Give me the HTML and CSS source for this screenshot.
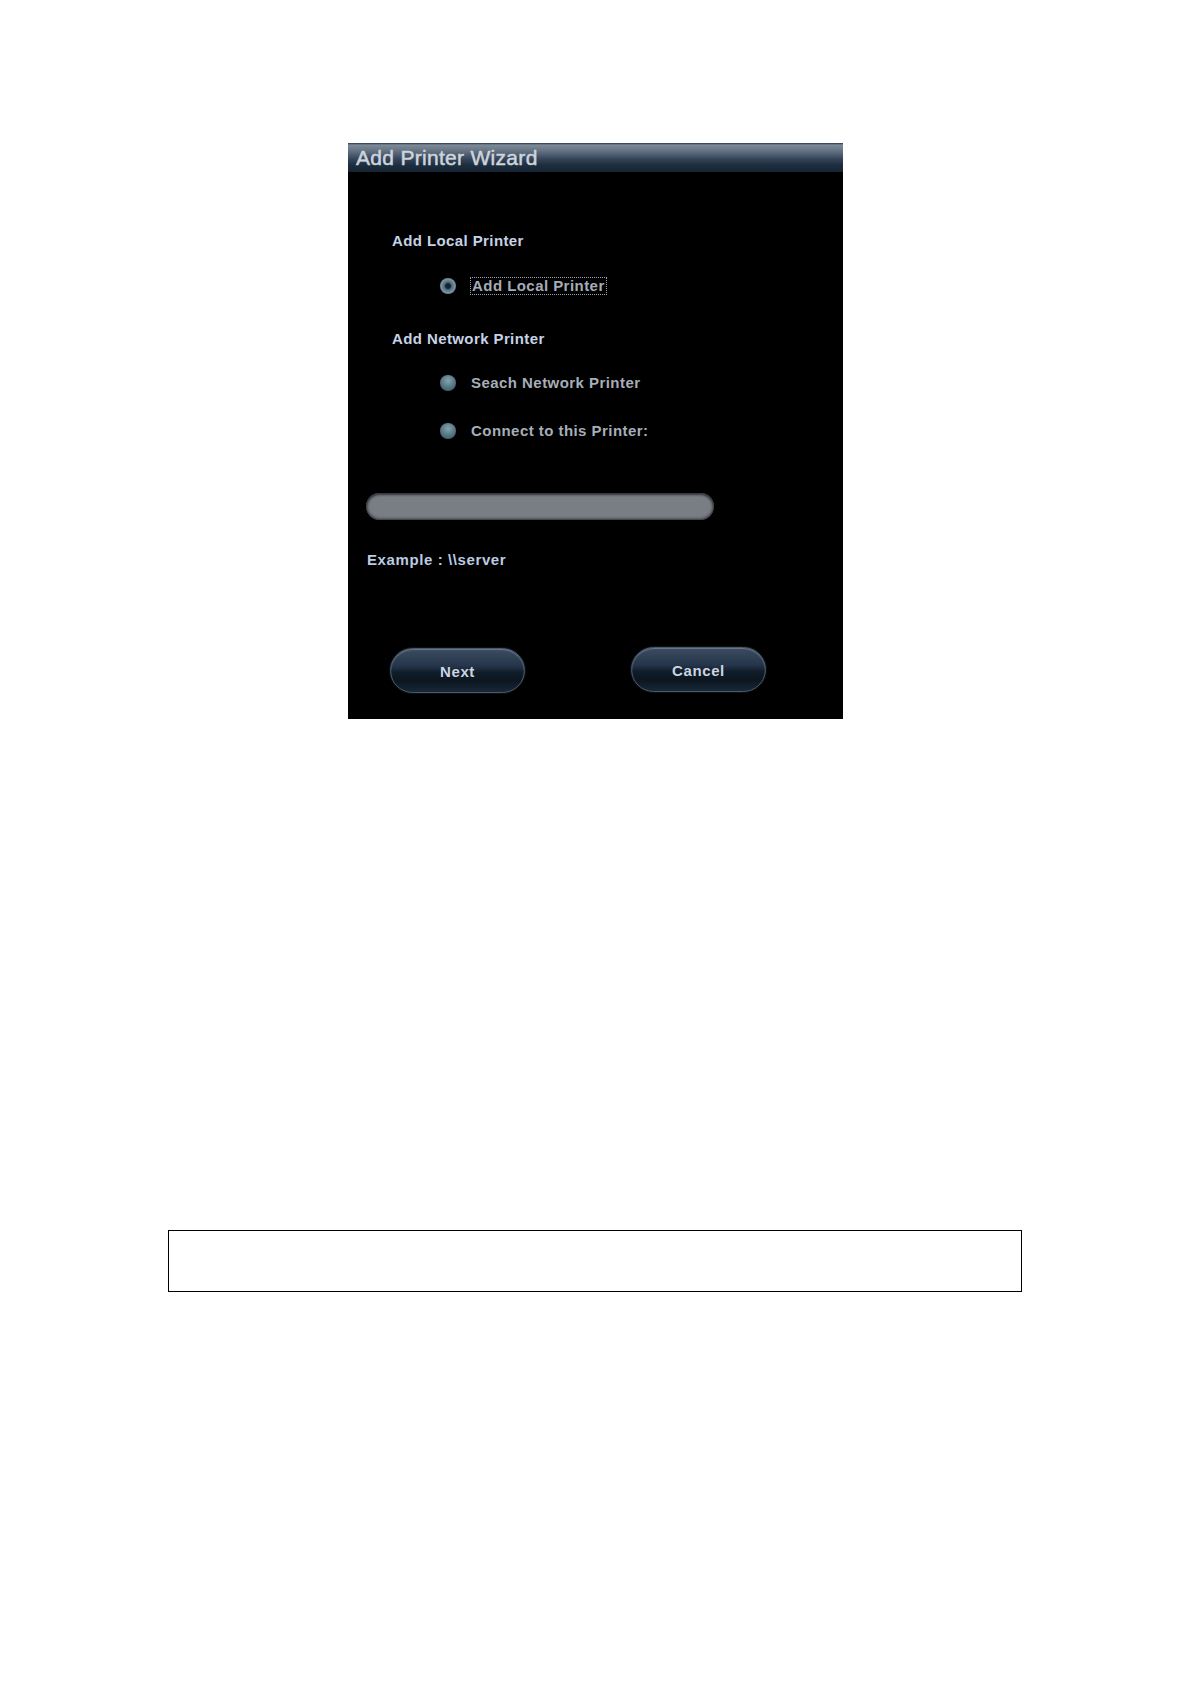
FILE: index.html
```html
<!DOCTYPE html>
<html lang="en">
<head>
<meta charset="utf-8">
<title>Add Printer Wizard</title>
<link rel="stylesheet" href="styles.css">
</head>
<body>
<div class="page">
  <div class="dialog">
    <div class="titlebar">Add Printer Wizard</div>
    <div class="content">
      <div class="heading h-local">Add Local Printer</div>
      <div class="radio-row r-local">
        <span class="radio selected"></span>
        <span class="label focused">Add Local Printer</span>
      </div>
      <div class="heading h-network">Add Network Printer</div>
      <div class="radio-row r-search">
        <span class="radio"></span>
        <span class="label">Seach Network Printer</span>
      </div>
      <div class="radio-row r-connect">
        <span class="radio"></span>
        <span class="label">Connect to this Printer:</span>
      </div>
      <div class="input-bar"></div>
      <div class="example">Example : \\server</div>
      <div class="buttons">
        <div class="btn btn-next">Next</div>
        <div class="btn btn-cancel">Cancel</div>
      </div>
    </div>
  </div>
  <div class="note-box"></div>
</div>
</body>
</html>
```
FILE: styles.css
```css
html, body {
  margin: 0;
  padding: 0;
  background: #ffffff;
}

.page {
  width: 1190px;
  padding-top: 143px;
}

.dialog {
  margin-left: 348px;
  width: 495px;
  height: 576px;
  background: #000000;
  display: flex;
  flex-direction: column;
  font-family: "Liberation Sans", Arial, sans-serif;
}

.titlebar {
  height: 29px;
  line-height: 29px;
  padding-left: 8px;
  font-size: 21px;
  letter-spacing: 0.3px;
  color: #cdd4dc;
  -webkit-text-stroke: 0.5px #cdd4dc;
  background: linear-gradient(#2a3442 0px, #7c8a9a 2px, #5e6c7c 9px, #34445a 16px, #1e2e3e 22px, #162432 29px);
}

.content {
  display: flex;
  flex-direction: column;
  padding-top: 60px;
}

.heading {
  margin-left: 44px;
  font-size: 15px;
  line-height: 18px;
  font-weight: bold;
  letter-spacing: 0.4px;
  color: #c6d2e6;
}

.h-network { margin-top: 35px; }

.radio-row {
  display: flex;
  align-items: center;
  margin-left: 92px;
  height: 18px;
}

.r-local { margin-top: 27px; }
.r-search { margin-top: 26px; }
.r-connect { margin-top: 30px; }

.radio {
  width: 16px;
  height: 16px;
  border-radius: 50%;
  flex: none;
  background: radial-gradient(circle at 50% 35%, #86a4b0 0%, #5c7c88 45%, #34505c 100%);
  box-shadow: 0 0 1px #223;
}

.radio.selected {
  background: radial-gradient(circle at 50% 50%, #121c24 0%, #1a2a34 22%, #4a6874 32%, #7894a0 60%, #3e5864 100%);
}

.label {
  margin-left: 15px;
  font-size: 15px;
  line-height: 16px;
  font-weight: bold;
  letter-spacing: 0.45px;
  color: #a6aeb8;
}

.label.focused {
  border: 1px dotted #9aa2ac;
  padding: 0 1px;
  margin-left: 14px;
  color: #a4acb8;
}

.input-bar {
  margin-top: 53px;
  margin-left: 18px;
  width: 348px;
  height: 27px;
  border-radius: 14px;
  background: #797e85;
  box-shadow: inset 0 0 3px 1px #2a2c30, inset 0 2px 2px #4a4e54;
}

.example {
  margin-top: 31px;
  margin-left: 19px;
  font-size: 15px;
  line-height: 18px;
  font-weight: bold;
  letter-spacing: 0.6px;
  color: #bccbe2;
}

.buttons {
  display: flex;
  margin-top: 78px;
  margin-left: 42px;
  gap: 106px;
  align-items: flex-start;
}

.btn {
  box-sizing: border-box;
  width: 135px;
  height: 45px;
  border-radius: 23px;
  border: 1px solid #4c5a68;
  box-shadow: 0 0 0 1px #0c1016, inset 0 1px 1px #6a7a8c;
  background: linear-gradient(#3c4c60 0%, #24344a 40%, #101c2a 55%, #0c1620 75%, #182838 100%);
  color: #ccd4e0;
  font-size: 15px;
  font-weight: bold;
  letter-spacing: 0.6px;
  text-align: center;
  line-height: 41px;
  padding-top: 2px;
}

.btn-next { margin-top: 1px; }

.note-box {
  margin-top: 511px;
  margin-left: 168px;
  width: 852px;
  height: 60px;
  border: 1px solid #000000;
}
```
